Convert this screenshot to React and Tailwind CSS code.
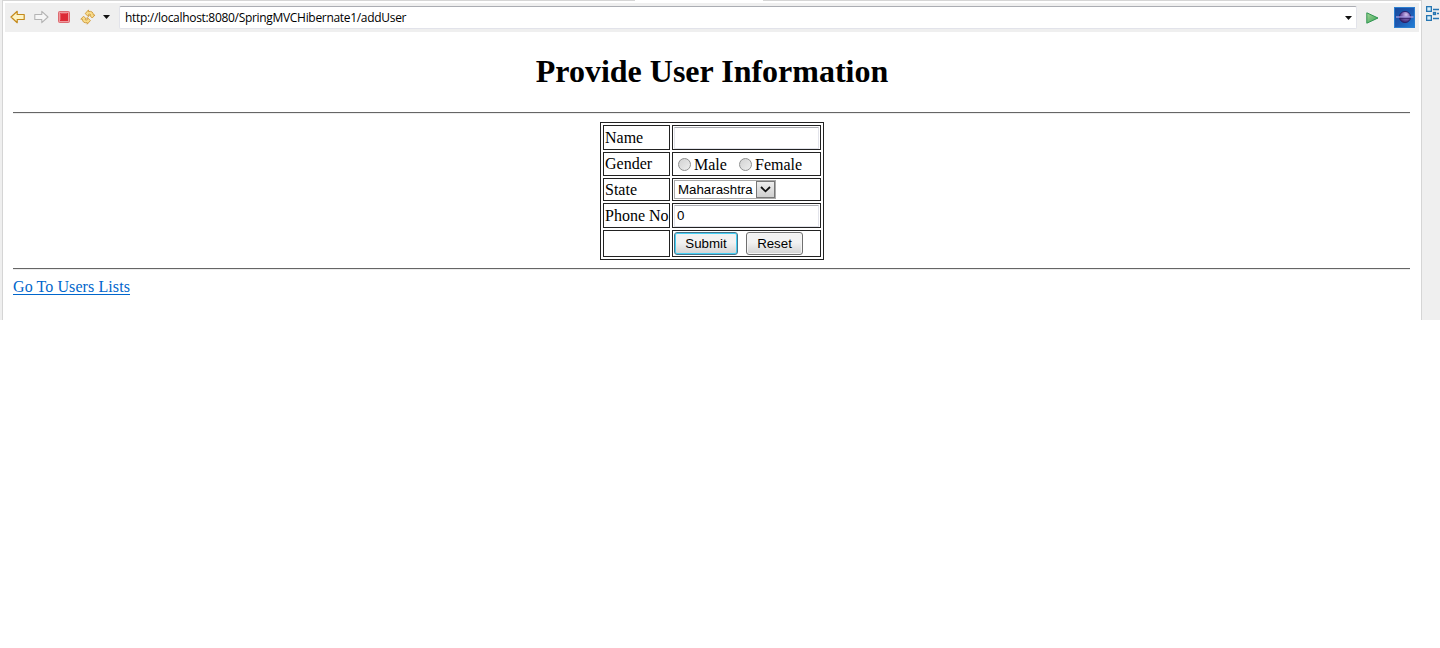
const serif = "font-['Liberation_Serif',serif]";

function BackArrow() {
  return (
    <svg width="16" height="16" viewBox="0 0 16 16">
      <path d="M1 8 7.2 2.3V5.5H14.2V10.5H7.2V13.7Z" fill="#fdf3c4" stroke="#c48a1c" strokeWidth="1.2" strokeLinejoin="round" />
    </svg>
  );
}

function ForwardArrow() {
  return (
    <svg width="16" height="16" viewBox="0 0 16 16">
      <path d="M15 8 8.8 2.3V5.5H1.8V10.5H8.800V13.7Z" fill="#f6f6f6" stroke="#b4b4b4" strokeWidth="1.1" strokeLinejoin="round" />
    </svg>
  );
}

function StopIcon() {
  return (
    <svg width="12" height="12" viewBox="0 0 12 12">
      <rect x="0.5" y="0.5" width="11" height="11" rx="1" fill="#ee9a9e" stroke="#dd6a70" />
      <rect x="2" y="2" width="8" height="8" fill="#dc2a35" />
      <path d="M2.5 9V2.5H9" fill="none" stroke="#e4545c" />
    </svg>
  );
}

function RefreshIcon() {
  return (
    <svg width="16" height="16" viewBox="0 0 16 16" fill="#f8dc8b" stroke="#cf9a3c" strokeWidth="0.9" strokeLinejoin="round">
      <path d="M5.200 4.600 8.500 .9V2.600C11.500 1.800 13.300 3.200 13.400 6H15L12.200 9 9.500 6.200H10.800C10.600 5.200 9.800 5 8.600 5.300V7.800Z" />
      <path d="M10.400 11.600 7.200 15.200V13.600C4.200 14.300 2.600 13 2.400 10.200H.8L3.600 7.200 6.300 10H5C5.200 11.100 6 11.200 7.200 10.900V8.400Z" />
    </svg>
  );
}

function DownTriangle() {
  return (
    <svg width="7" height="4" viewBox="0 0 7 4">
      <path d="M0 0H7L3.5 4Z" fill="#111" />
    </svg>
  );
}

function PlayIcon() {
  return (
    <svg width="13" height="12" viewBox="0 0 13 12">
      <defs>
        <linearGradient id="play" x1="0" y1="0" x2="1" y2="1">
          <stop offset="0" stopColor="#a5d595" />
          <stop offset="1" stopColor="#35a257" />
        </linearGradient>
      </defs>
      <path d="M.8 .8 12 6 .8 11.2Z" fill="url(#play)" stroke="#2f9550" strokeLinejoin="round" />
    </svg>
  );
}

function BrowserLogo() {
  return (
    <svg width="21" height="21" viewBox="0 0 21 21">
      <defs>
        <linearGradient id="sky" x1="0" y1="0" x2="1" y2="1">
          <stop offset="0" stopColor="#174a9c" />
          <stop offset=".5" stopColor="#1d58b0" />
          <stop offset="1" stopColor="#2280d8" />
        </linearGradient>
        <radialGradient id="planet" cx=".6" cy=".3" r=".75">
          <stop offset="0" stopColor="#d5c3ee" />
          <stop offset=".45" stopColor="#8065b5" />
          <stop offset="1" stopColor="#2b1860" />
        </radialGradient>
      </defs>
      <rect x=".5" y=".5" width="20" height="20" fill="url(#sky)" stroke="#2d7fd0" />
      <circle cx="11" cy="10" r="5.6" fill="url(#planet)" stroke="#2b1860" strokeWidth=".8" />
      <path d="M2 10H19.500" stroke="#a79be4" strokeWidth="1.300" />
      <path d="M6 11.300H16" stroke="#2b1860" strokeWidth=".9" />
    </svg>
  );
}

function OutlineIcon() {
  return (
    <svg width="15" height="16" viewBox="0 0 15 16" fill="none" stroke="#2676b2" strokeWidth="1.3">
      <rect x=".65" y=".65" width="4.700" height="4.700" fill="#d9effa" />
      <rect x=".65" y="9.650" width="4.700" height="4.700" fill="#d9effa" />
      <rect x="7.500" y="6.500" width="2" height="2" fill="#d9effa" />
      <path d="M7 3.500H13M11 7.500H13M7 12.500H13" />
    </svg>
  );
}

function Toolbar() {
  return (
    <div className="ml-[2px] mt-[2px] flex h-[29px] w-[1414px] items-center bg-[#efefef]">
      <div className="flex w-[114px] shrink-0 items-center pb-px pl-[5px]">
        <BackArrow />
        <span className="ml-[7px]"><ForwardArrow /></span>
        <span className="ml-[9px]"><StopIcon /></span>
        <span className="ml-[10px]"><RefreshIcon /></span>
        <span className="ml-[7px]"><DownTriangle /></span>
      </div>
      <div className="flex h-[23px] w-[1238px] shrink-0 items-center justify-between rounded-[2px] border border-[#e2e3ea] border-t-[#abadb3] bg-white pl-[5px] pr-[4px]">
        <span className="whitespace-nowrap font-['Open_Sans',sans-serif] text-[12px] leading-[20px] tracking-[-0.31px] text-black">http://localhost:8080/SpringMVCHibernate1/addUser</span>
        <DownTriangle />
      </div>
      <span className="ml-[9px]"><PlayIcon /></span>
      <span className="ml-[15px]"><BrowserLogo /></span>
    </div>
  );
}

function Cell({ children }) {
  return <div className="flex items-center overflow-hidden whitespace-nowrap border border-[#222]">{children}</div>;
}

function Label({ children }) {
  return <span className="pl-px text-[16px] leading-[20px]">{children}</span>;
}

function TextField({ value, name }) {
  return (
    <input
      name={name}
      defaultValue={value}
      className="ml-px h-[22px] w-[145px] border border-[#e2e3ea] border-t-[#abadb3] bg-white pl-[2px] font-['Liberation_Sans',sans-serif] text-[13.3px] outline-none"
    />
  );
}

function Radio() {
  return <input type="radio" name="gender" className="size-[13px] shrink-0 appearance-none rounded-full border border-[#8e8f8f] bg-linear-to-br from-[#d2d2d2] to-[#eeeeee]" />;
}

const buttonBase =
  "h-[23px] rounded-[3px] border bg-linear-to-b from-[#f2f2f2] from-45% to-[#d3d3d3] font-['Liberation_Sans',sans-serif] text-[13.3px] leading-[20px]";

function UserForm() {
  return (
    <form className="mx-auto grid h-[138px] w-[224px] grid-cols-[67px_149px] grid-rows-[25px_24px_23px_25px_27px] gap-[2px] border border-[#222] p-[2px]">
      <Cell><Label>Name</Label></Cell>
      <Cell><TextField name="name" value="" /></Cell>
      <Cell><Label>Gender</Label></Cell>
      <Cell>
        <span className="ml-[5px] flex"><Radio /></span>
        <span className="ml-[3px] w-[45px] pt-[2px] text-[16px] leading-[20px]">Male</span>
        <Radio />
        <span className="ml-[3px] pt-[2px] text-[16px] leading-[20px]">Female</span>
      </Cell>
      <Cell><Label>State</Label></Cell>
      <Cell>
        <div className="ml-px flex h-[19px] w-[102px] items-center justify-between border border-[#ababab] bg-white pl-[3px] font-['Liberation_Sans',sans-serif] text-[13.3px]">
          <span className="leading-[16px]">Maharashtra</span>
          <span className="flex h-[17px] w-[19px] items-center justify-center border border-[#777] bg-linear-to-b from-[#eeeeee] to-[#cfcfcf]">
            <svg width="11" height="7" viewBox="0 0 11 7" fill="none" stroke="#111" strokeWidth="1.8">
              <path d="M1 1 5.500 5.300 10 1" />
            </svg>
          </span>
        </div>
      </Cell>
      <Cell><Label>Phone No</Label></Cell>
      <Cell><TextField name="phone" value="0" /></Cell>
      <Cell />
      <Cell>
        <button type="button" className={`${buttonBase} ml-px w-[64px] border-[#46758c] shadow-[inset_0_0_0_1px_#45d0f5]`}>Submit</button>
        <button type="button" className={`${buttonBase} ml-[8px] w-[57px] border-[#707070] shadow-[inset_0_0_0_1px_#f5f5f5]`}>Reset</button>
      </Cell>
    </form>
  );
}

function Rule() {
  return <div className="h-[2px] w-[1397px] border-b border-t border-b-[#ededed] border-t-[#666]" />;
}

export default function App() {
  return (
    <div className="h-[648px] w-[1440px] overflow-hidden bg-white">
      <div className="flex h-[320px]">
        <div className="w-[3px] shrink-0 border-r border-[#d5d5d5] bg-[#efefef]" />
        <div className="w-[1418px] shrink-0">
          <div className="flex h-px justify-between">
            <div className="w-[632px] bg-[#d5d5d5]" />
            <div className="w-[658px] bg-[#d5d5d5]" />
          </div>
          <Toolbar />
          <main className={`${serif} pl-[10px] text-black`}>
            <div className="w-[1398px]">
              <h1 className="h-[80px] pt-[21px] text-center text-[32px] font-bold leading-[37px]">Provide User Information</h1>
              <Rule />
              <div className="h-[154px] pt-[8px]"><UserForm /></div>
              <Rule />
              <a href="#" className="mt-[7px] inline-block text-[16px] leading-[20px] tracking-[0.09px] text-[#0066cc] underline decoration-[#0066cc] decoration-1 underline-offset-[2px]">Go To Users Lists</a>
            </div>
          </main>
        </div>
        <div className="w-[19px] shrink-0 border-l border-[#d5d5d5] bg-[#efefef] pl-[4px] pt-[6px]"><OutlineIcon /></div>
      </div>
    </div>
  );
}
